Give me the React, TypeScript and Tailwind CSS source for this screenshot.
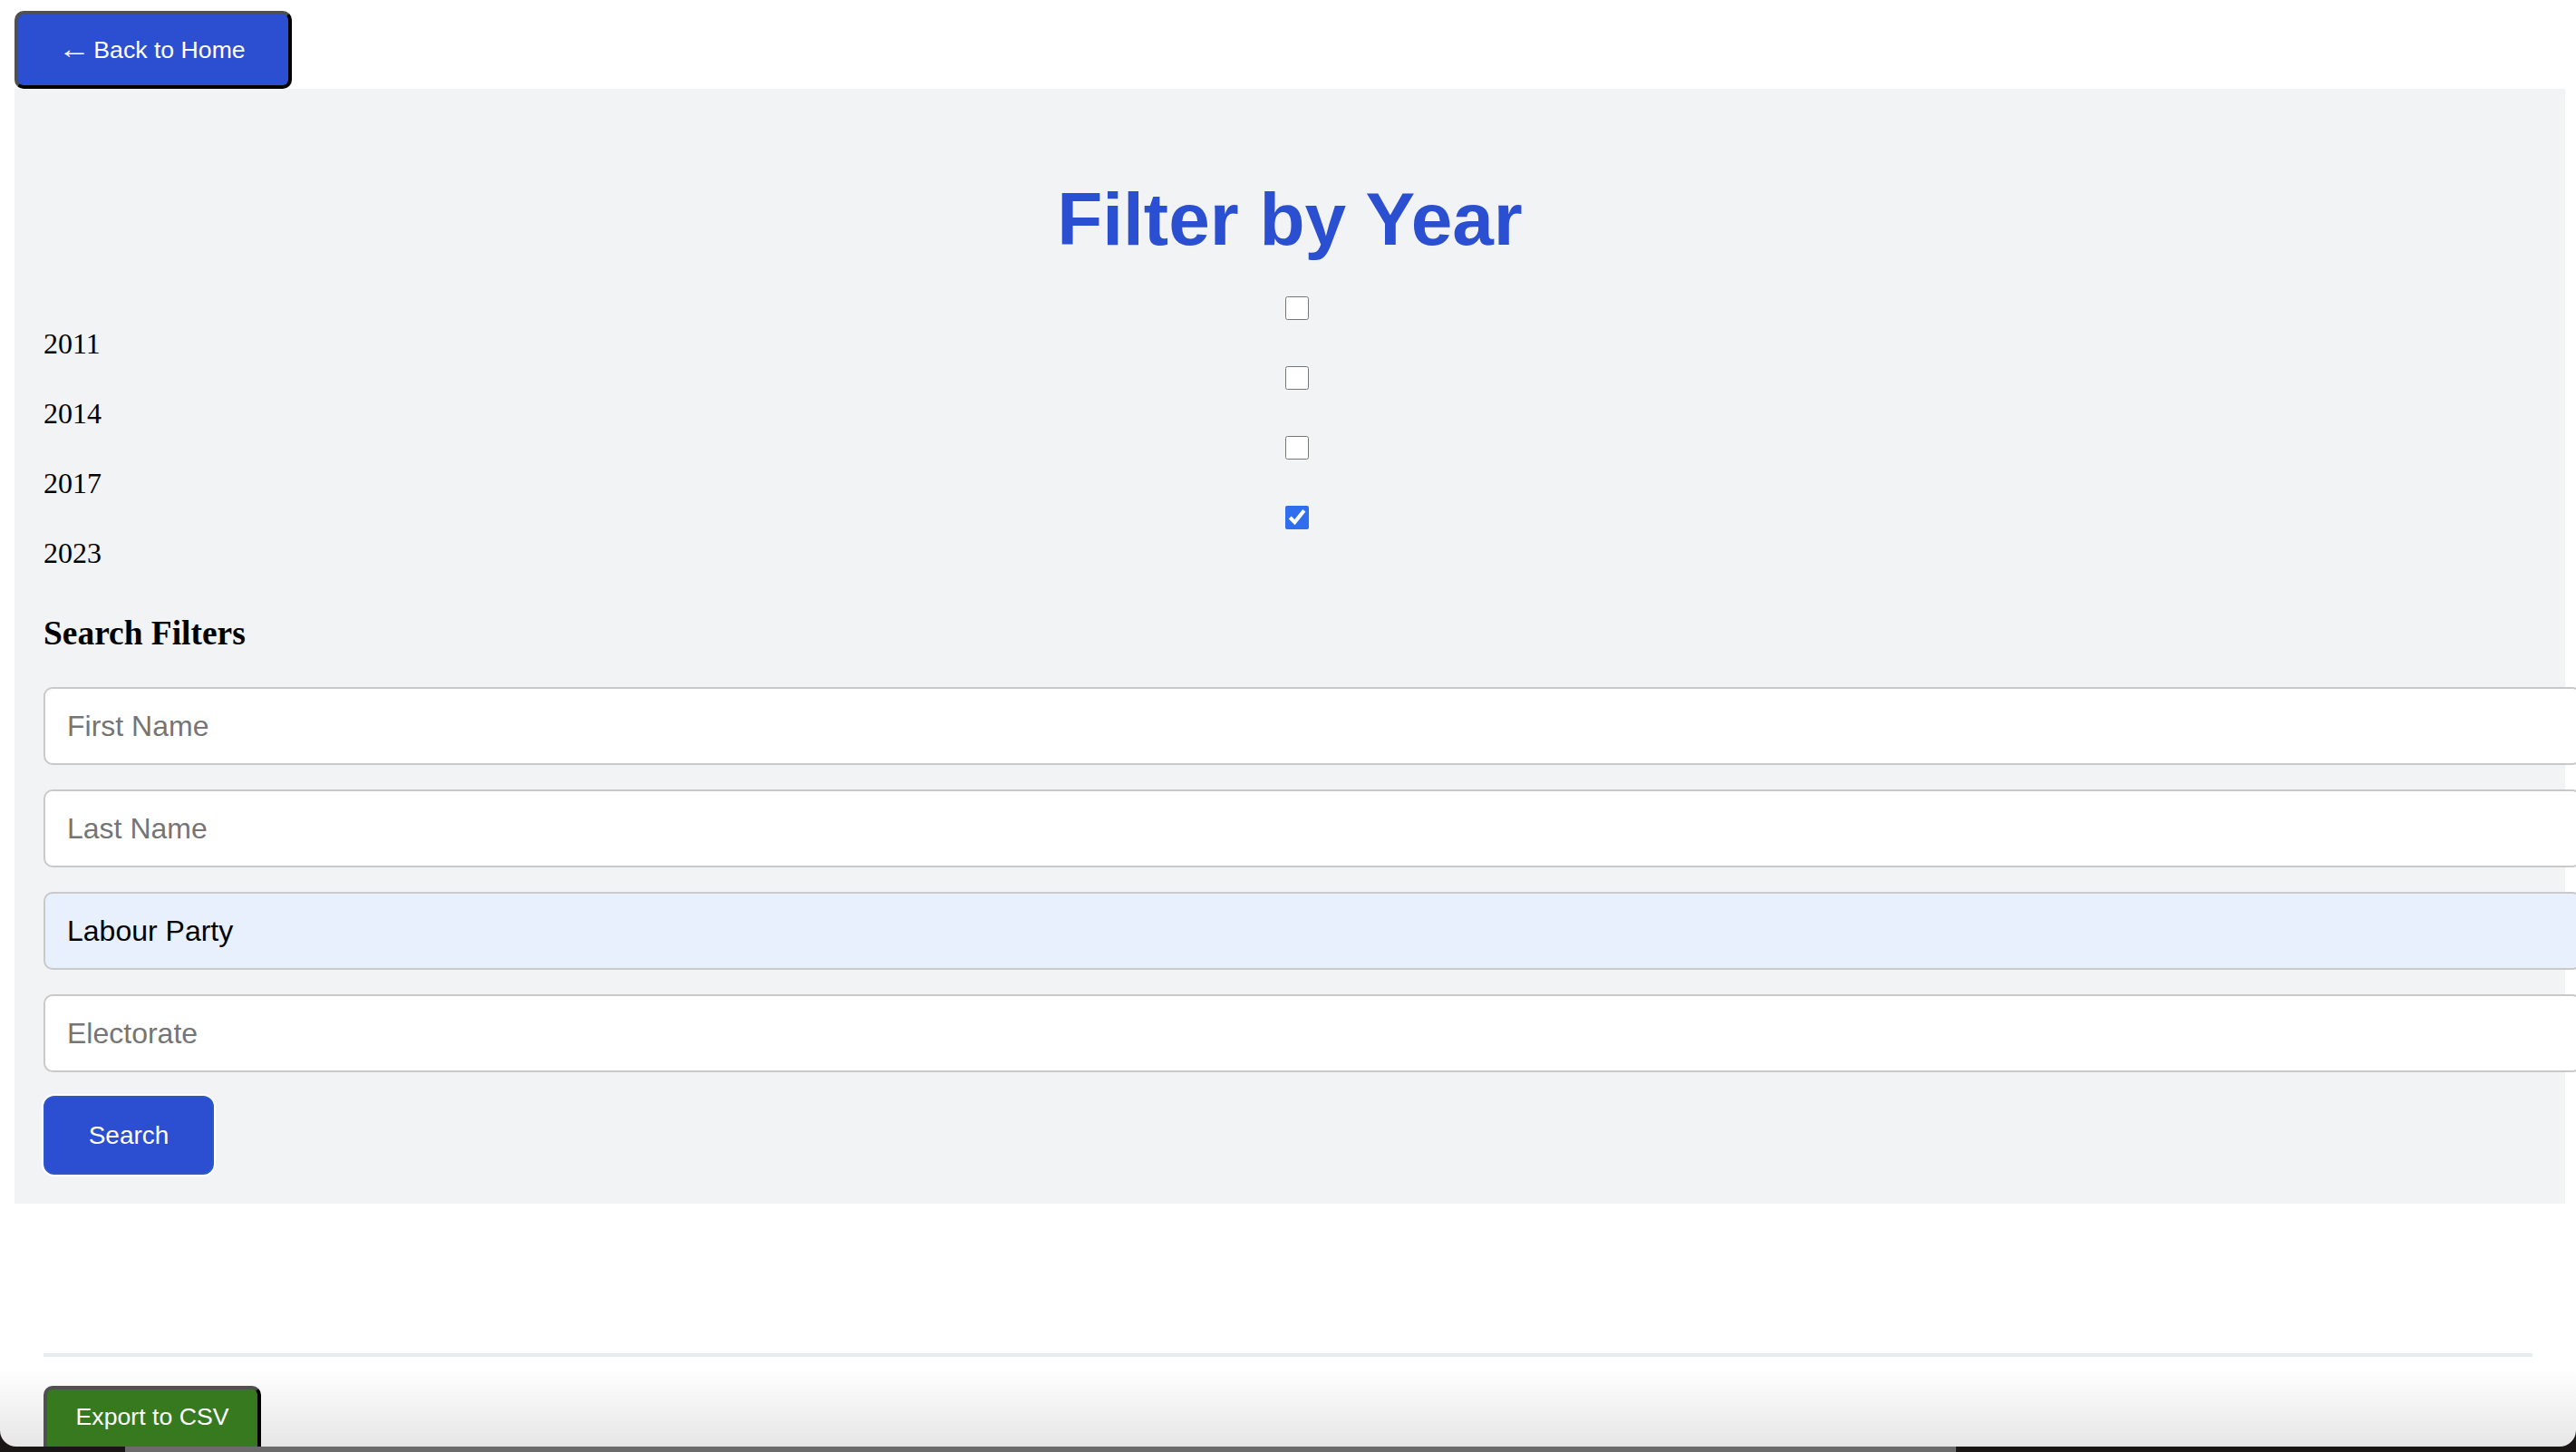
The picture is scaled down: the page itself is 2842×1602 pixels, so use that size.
import { useState } from "react";

const YEARS = ["2011", "2014", "2017", "2023"];

const sans = "font-['Liberation_Sans',Arial,sans-serif]";
const serif = "font-['Liberation_Serif','Times_New_Roman',serif]";

const inputBase = `${sans} w-[2800px] h-[86px] pl-[24px] pr-[16px] rounded-[10px] border-[2px] border-[#c9c9c9] text-[32px] text-black placeholder:text-[#757575] outline-none`;

const App = () => {
  const [checked, setChecked] = useState<Record<string, boolean>>({
    "2023": true,
  });
  const [party, setParty] = useState("Labour Party");

  const toggleYear = (year: string) =>
    setChecked((prev) => ({ ...prev, [year]: !prev[year] }));

  return (
    <div className="w-[2842px] h-[1602px] bg-[#1b1616] overflow-hidden">
      {/* browser window */}
      <div
        className={`relative h-[1596px] overflow-hidden rounded-b-[18px] bg-[linear-gradient(to_bottom,#ffffff_1510px,#e6e6e6_1596px)] ${serif} text-black`}
      >
        <div className="pt-[12px] pl-[16px]">
          <button
            className={`${sans} flex items-center justify-center gap-[6px] w-[306px] h-[86px] rounded-[10px] border-[4px] border-t-[#505050] border-l-[#505050] border-b-black border-r-black bg-[#2b4fd0] text-white text-[26.67px]`}
          >
            <span className="text-[30px] leading-none -mt-[3px] scale-x-[1.2]">←</span>
            <span>Back to Home</span>
          </button>
        </div>

        {/* filter panel */}
        <div className="ml-[16px] w-[2814px] bg-[#f2f3f5] px-[32px] pt-[32px] pb-[32px]">
          <h1
            className={`${sans} mt-[66px] mb-[32px] text-center text-[82px] leading-[92px] font-bold text-[#2b4fd1]`}
          >
            Filter by Year
          </h1>

          <div className="flex flex-col">
            {YEARS.map((year) => (
              <label key={year} className="flex flex-col h-[77px] cursor-pointer">
                <div className="flex justify-center pl-[15px] pt-[7px]">
                  <input
                    type="checkbox"
                    checked={!!checked[year]}
                    onChange={() => toggleYear(year)}
                    className="w-[26px] h-[26px] m-0 accent-[#2f6fef]"
                  />
                </div>
                <span className="mt-[8px] text-[32px] leading-[36px]">{year}</span>
              </label>
            ))}
          </div>

          <h3 className="mt-[49px] mb-[38px] text-[37.44px] leading-[43px] font-bold">
            Search Filters
          </h3>

          <div className="flex flex-col gap-[27px]">
            <input placeholder="First Name" className={`${inputBase} bg-white`} />
            <input placeholder="Last Name" className={`${inputBase} bg-white`} />
            <input
              placeholder="Party"
              value={party}
              onChange={(e) => setParty(e.target.value)}
              className={`${inputBase} bg-[#e8f0fe]`}
            />
            <input placeholder="Electorate" className={`${inputBase} bg-white`} />
          </div>

          <button
            className={`${sans} mt-[26px] w-[188px] h-[87px] rounded-[12px] border-[2px] border-[#2c58c9] bg-[#2b4fd0] text-white text-[28px] font-medium shadow-[0_0_0_2px_#ffffff]`}
          >
            Search
          </button>
        </div>

        {/* results footer */}
        <div className="px-[48px]">
          <hr className="mt-[165px] h-[4px] border-0 bg-[#e9ecef]" />
          <button
            className={`${sans} mt-[32px] flex items-center justify-center w-[240px] h-[86px] pb-[18px] rounded-[10px] border-[4px] border-t-[#505050] border-l-[#505050] border-b-black border-r-black bg-[#37791f] text-white text-[26.67px]`}
          >
            Export to CSV
          </button>
        </div>
      </div>

      {/* desktop strip below window */}
      <div className="flex h-[6px]">
        <div className="w-[138px] bg-[#1b1616]" />
        <div className="w-[2020px] bg-[#6b6b6b]" />
        <div className="flex-1 bg-[#1b1616]" />
      </div>
    </div>
  );
};

export default App;
